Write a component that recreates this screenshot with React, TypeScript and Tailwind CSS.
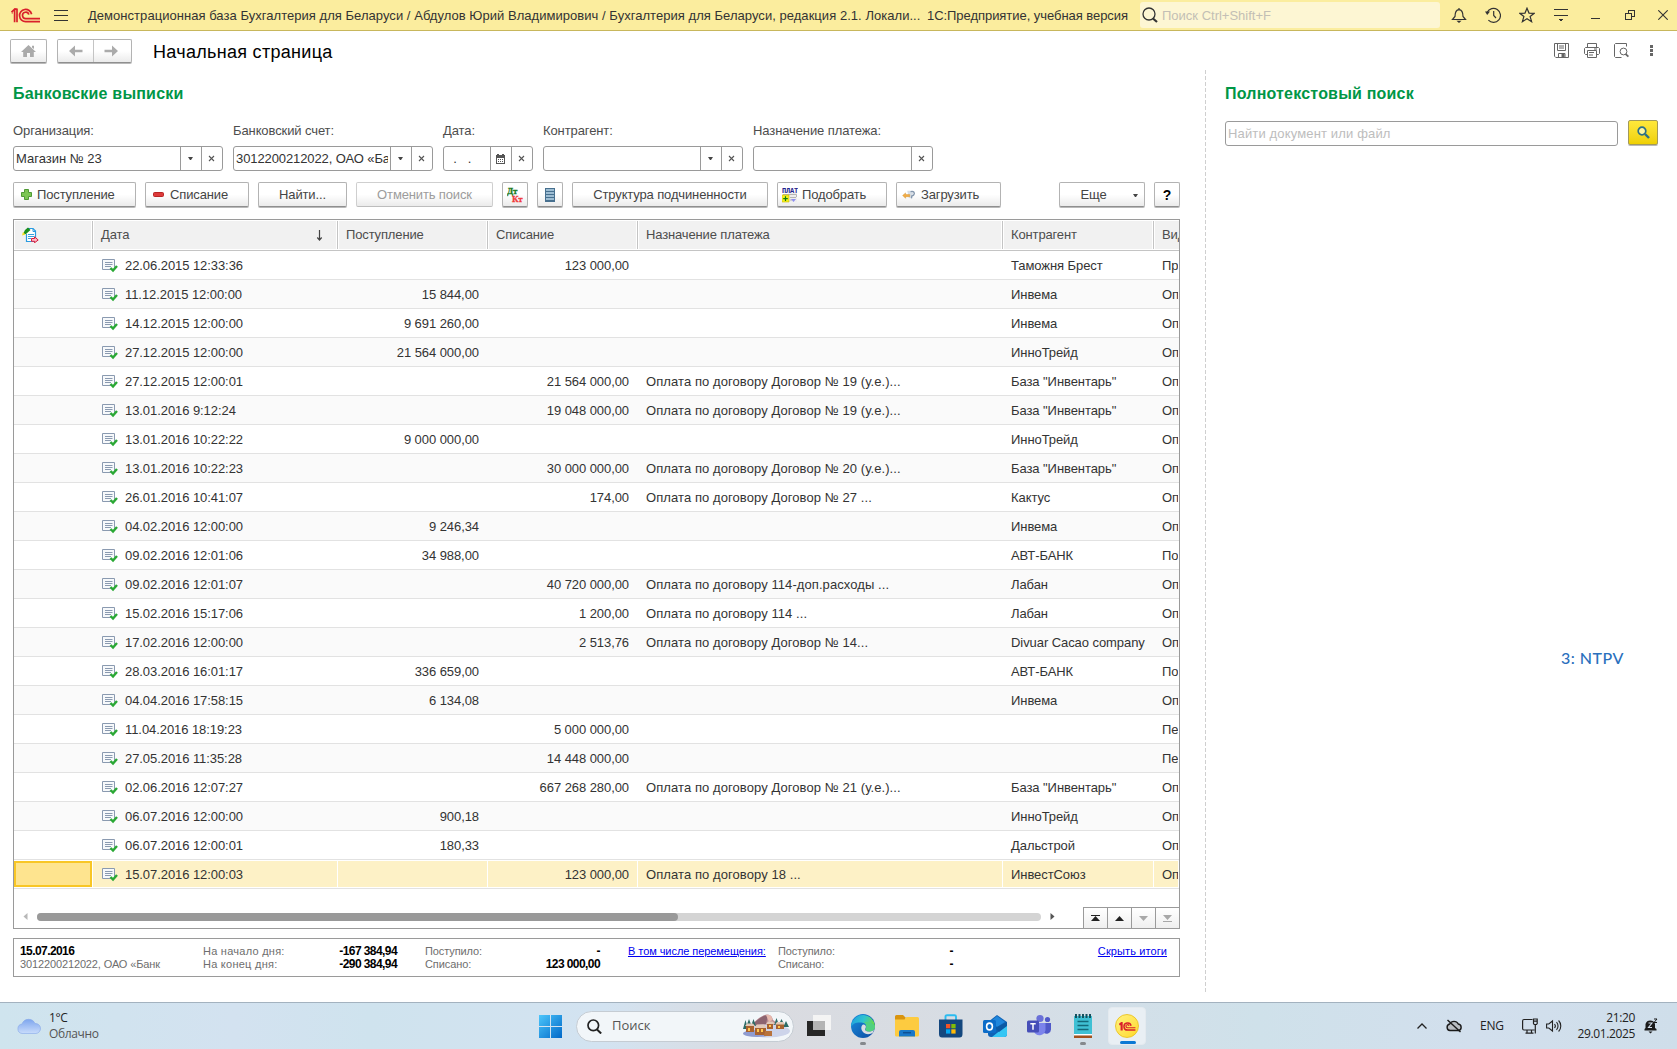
import React from "react";

type Row = [string, string, string, string, string, string];

const rows: Row[] = [
  ["22.06.2015 12:33:36", "", "123 000,00", "", "Таможня Брест", "Про"],
  ["11.12.2015 12:00:00", "15 844,00", "", "", "Инвема", "Опл"],
  ["14.12.2015 12:00:00", "9 691 260,00", "", "", "Инвема", "Опл"],
  ["27.12.2015 12:00:00", "21 564 000,00", "", "", "ИнноТрейд", "Опл"],
  ["27.12.2015 12:00:01", "", "21 564 000,00", "Оплата по договору Договор № 19 (у.е.)...", 'База "Инвентарь"', "Опл"],
  ["13.01.2016 9:12:24", "", "19 048 000,00", "Оплата по договору Договор № 19 (у.е.)...", 'База "Инвентарь"', "Опл"],
  ["13.01.2016 10:22:22", "9 000 000,00", "", "", "ИнноТрейд", "Опл"],
  ["13.01.2016 10:22:23", "", "30 000 000,00", "Оплата по договору Договор № 20 (у.е.)...", 'База "Инвентарь"', "Опл"],
  ["26.01.2016 10:41:07", "", "174,00", "Оплата по договору Договор № 27 ...", "Кактус", "Опл"],
  ["04.02.2016 12:00:00", "9 246,34", "", "", "Инвема", "Опл"],
  ["09.02.2016 12:01:06", "34 988,00", "", "", "АВТ-БАНК", "Пос"],
  ["09.02.2016 12:01:07", "", "40 720 000,00", "Оплата по договору 114-доп.расходы ...", "Лабан", "Опл"],
  ["15.02.2016 15:17:06", "", "1 200,00", "Оплата по договору 114 ...", "Лабан", "Опл"],
  ["17.02.2016 12:00:00", "", "2 513,76", "Оплата по договору Договор № 14...", "Divuar Cacao company", "Опл"],
  ["28.03.2016 16:01:17", "336 659,00", "", "", "АВТ-БАНК", "Пос"],
  ["04.04.2016 17:58:15", "6 134,08", "", "", "Инвема", "Опл"],
  ["11.04.2016 18:19:23", "", "5 000 000,00", "", "", "Пер"],
  ["27.05.2016 11:35:28", "", "14 448 000,00", "", "", "Пер"],
  ["02.06.2016 12:07:27", "", "667 268 280,00", "Оплата по договору Договор № 21 (у.е.)...", 'База "Инвентарь"', "Опл"],
  ["06.07.2016 12:00:00", "900,18", "", "", "ИнноТрейд", "Опл"],
  ["06.07.2016 12:00:01", "180,33", "", "", "Дальстрой", "Опл"],
  ["15.07.2016 12:00:03", "", "123 000,00", "Оплата по договору 18 ...", "ИнвестСоюз", "Опл"],
];

const GRID = "grid grid-cols-[79px_245px_150px_150px_365px_151px_25px]";

function Logo1C({ className }: { className?: string }) {
  return (
    <svg className={className} viewBox="0 0 29 15" fill="none" stroke="#d9202b" strokeWidth="1.7">
      <path d="M0.5 4.2 L3.6 1.2 V14.2 M0.8 4.9 H1.6 M6 0.6 V14.2 M3.2 1.2 H6" />
      <path d="M20.6 6.2 A6.1 6.1 0 1 0 14.8 13.6 H29" />
      <path d="M17.8 6.6 A3.2 3.2 0 1 0 14.8 10.6 H29" />
    </svg>
  );
}

function TitleBar() {
  return (
    <header className="flex h-[31px] shrink-0 items-center border-b border-[#c8b75c] bg-[#fbed9e] text-[13px] text-[#333]">
      <Logo1C className="ml-[11px] h-[15px] w-[29px]" />
      <svg className="ml-[14px] h-[13px] w-[14px]" viewBox="0 0 14 13" stroke="#333" shapeRendering="crispEdges">
        <path d="M0 1.5H14M0 6.5H14M0 11.5H14" />
      </svg>
      <span className="ml-5 w-[839px] pt-px tracking-[0.04px] whitespace-nowrap">
        Демонстрационная база Бухгалтерия для Беларуси / Абдулов Юрий Владимирович / Бухгалтерия для Беларуси, редакция 2.1. Локали...
      </span>
      <span className="w-[213px] pt-px tracking-[-0.05px] whitespace-nowrap">1С:Предприятие, учебная версия</span>
      <div className="flex h-[26px] w-[300px] items-center rounded-[3px] bg-[#fdf6d3] pl-[2px] text-[#c3bfb5]">
        <svg className="mr-[4px] h-4 w-4" viewBox="0 0 16 16" fill="none" stroke="#333">
          <circle cx="7" cy="7" r="6" strokeWidth="1.3" />
          <path d="M11 11.5L15 15" strokeWidth="2.2" />
        </svg>
        <span className="pt-px">Поиск Ctrl+Shift+F</span>
      </div>
      <svg className="ml-[11px] h-4 w-4" viewBox="0 0 16 16" fill="none" stroke="#333" strokeWidth="1.2">
        <path d="M1.500 12.500H14.500L12 9.500C12 5 10.800 2.800 8 2.600C5.200 2.800 4 5 4 9.500ZM8 1V2.600" />
        <path d="M5.500 13.800H10.500L8 16Z" fill="#333" stroke="none" />
      </svg>
      <svg className="ml-[18px] h-4 w-4" viewBox="0 0 16 16" fill="none" stroke="#333" strokeWidth="1.2">
        <path d="M2.200 5.200A7 7 0 1 1 3.400 13.200M8.700 4V8.500L11 11" />
        <path d="M0 4.500H5L2.200 8Z" fill="#333" stroke="none" />
      </svg>
      <svg className="ml-[18px] h-4 w-4" viewBox="0 0 16 16" fill="none" stroke="#333" strokeWidth="1.2">
        <path d="M8 1.200L10 6.100L15.200 6.300L11.100 9.500L12.600 14.700L8 11.700L3.400 14.700L4.900 9.500L0.800 6.300L6 6.100Z" />
      </svg>
      <svg className="ml-[19px] h-[13px] w-[14px]" viewBox="0 0 14 13" stroke="#333" shapeRendering="crispEdges">
        <path d="M0 0.500H14M0 6.500H14" />
        <path d="M4.500 10H9.500L7 13Z" fill="#333" stroke="none" />
      </svg>
      <span className="mt-[7px] ml-[23px] h-px w-[9px] bg-[#333]" />
      <svg className="ml-[25px] h-[10px] w-[10px]" viewBox="0 0 10 10" fill="none" stroke="#333" shapeRendering="crispEdges">
        <path d="M0.500 3.500H6.500V9.500H0.500ZM3.500 3V0.500H9.500V6.500H7" />
      </svg>
      <svg className="ml-[23px] h-[10px] w-[10px]" viewBox="0 0 10 10" stroke="#333" strokeWidth="1.1">
        <path d="M0.300 0.300L9.700 9.700M9.700 0.300L0.300 9.700" />
      </svg>
    </header>
  );
}

const btn =
  "flex items-center rounded-[2px] border border-[#b3b3b3] border-b-[#8f8f8f] bg-linear-to-b from-white from-50% to-[#ebebeb] shadow-[0_1px_0_#b9b9b9]";

function NavBar() {
  return (
    <div className="flex h-[39px] shrink-0 pt-2 pl-[10px]">
      <div className={`${btn} h-6 w-[37px] justify-center`}>
        <svg className="h-3 w-[15px]" viewBox="0 0 15 12" fill="#ababab">
          <path d="M7.500 0L15 7H12.800V12H9V8H6V12H2.200V7H0ZM11 0.800H13V4L11 2.400Z" />
        </svg>
      </div>
      <div className={`${btn} ml-[10px] h-6 w-[75px]`}>
        <div className="flex flex-1 justify-center pl-px">
          <svg className="h-3 w-[14px]" viewBox="0 0 14 12" fill="#ababab">
            <path d="M0 6L6 0.600V4.800H13.500V7.200H6V11.400Z" />
          </svg>
        </div>
        <span className="h-[22px] w-px bg-[#c4c4c4]" />
        <div className="flex flex-1 justify-center pr-[3px]">
          <svg className="h-3 w-[14px]" viewBox="0 0 14 12" fill="#ababab">
            <path d="M14 6L8 0.600V4.800H0.500V7.200H8V11.400Z" />
          </svg>
        </div>
      </div>
      <h1 className="ml-[21px] w-[1401px] text-[18px] leading-[26px] tracking-[0.3px] text-black">Начальная страница</h1>
      <div className="flex h-[15px] gap-[15px] pt-[4px]">
        <svg className="h-[15px] w-[15px]" viewBox="0 0 15 15" fill="none" stroke="#666">
          <path d="M1 0.500H14.500V14.500H1.800L0.500 13.200V0.500ZM3.500 0.500V7.500H11.500V0.500M5 3H10M5 5H10M4.500 14V10.500H11V14" />
          <path d="M7.500 11H10.500V14H7.500Z" fill="#666" stroke="none" />
        </svg>
        <svg className="h-[15px] w-4" viewBox="0 0 16 15" fill="none" stroke="#666">
          <path d="M3.500 4V0.500H12.500V4M3 11.500H1.500L0.500 10.500V5.500L1.500 4.500H14.500L15.500 5.500V10.500L14.500 11.500H13M3.500 7.500H12.500V14.500H3.500ZM5 9.500H10M5 12H9M10 6H13" />
        </svg>
        <svg className="-ml-px h-[15px] w-[15px]" viewBox="0 0 15 15" fill="none" stroke="#666">
          <path d="M7.500 14.500H1.500L0.500 13.500V1.500L1.500 0.500H12.500V3.500" />
          <circle cx="9.500" cy="8.500" r="3.400" />
          <path d="M11.500 10.800L14.400 13.600" strokeWidth="1.800" />
        </svg>
        <svg className="ml-[6px] h-[15px] w-[3px]" viewBox="0 0 3 15" fill="#666">
          <path d="M0 2H3V5H0ZM0 6H3V9H0ZM0 10H3V13H0Z" />
        </svg>
      </div>
    </div>
  );
}

function Field({ label, width, value, first, clip }: { label: string; width: string; value?: string; first?: "drop" | "cal"; clip?: boolean }) {
  return (
    <div className={width}>
      <div className="h-[18px] leading-[18px] tracking-[-0.1px] whitespace-nowrap text-[#4d4d4d]">{label}</div>
      <div className="mt-[6px] flex h-[25px] rounded-[3px] border border-[#9a9a9a] bg-white">
        <span className={`min-w-0 flex-1 overflow-hidden pl-[2px] leading-[24px] whitespace-pre text-[#333] ${clip ? "mr-[2px] tracking-[-0.1px]" : ""}`}>{value}</span>
        {first && (
          <span className="flex w-[21px] items-center justify-center border-l border-[#9a9a9a]">
            {first === "drop" ? (
              <svg className="mr-px h-[3px] w-[5px]" viewBox="0 0 5 3" fill="#444">
                <path d="M0 0H5L3 3H2Z" />
              </svg>
            ) : (
              <svg className="mr-[2px] h-[10px] w-[9px]" viewBox="0 0 9 10" fill="#555">
                <path d="M0 1H1V0H3V1H6V0H8V1H9V10H0ZM1 4V9H8V4Z" fillRule="evenodd" />
                <path d="M2 5H3V6H2ZM4 5H5V6H4ZM6 5H7V6H6ZM2 7H3V8H2ZM4 7H5V8H4ZM6 7H7V8H6Z" />
              </svg>
            )}
          </span>
        )}
        <span className="flex w-[21px] items-center justify-center border-l border-[#9a9a9a]">
          <svg className="mr-[2px] h-[7px] w-[7px]" viewBox="0 0 7 7" stroke="#555" strokeWidth="1.1">
            <path d="M1 1L6 6M6 1L1 6" />
          </svg>
        </span>
      </div>
    </div>
  );
}

function Filters() {
  return (
    <div className="mt-[18px] flex gap-[10px]">
      <Field label="Организация:" width="w-[210px]" value="Магазин № 23" first="drop" />
      <Field label="Банковский счет:" width="w-[200px]" value="3012200212022, ОАО «Банк" first="drop" clip />
      <Field label="Дата:" width="w-[90px]" value="  .   ." first="cal" />
      <Field label="Контрагент:" width="w-[200px]" first="drop" />
      <Field label="Назначение платежа:" width="w-[180px]" />
    </div>
  );
}

function Toolbar() {
  return (
    <div className="mt-[11px] flex h-[25px] tracking-[-0.14px] text-[#444]">
      <button className={`${btn} w-[123px] pl-[7px]`}>
        <svg className="mr-[5px] h-[11px] w-[11px]" viewBox="0 0 11 11">
          <path d="M3.500 0.500H7.500V3.500H10.500V7.500H7.500V10.500H3.500V7.500H0.500V3.500H3.500Z" fill="#7cc653" stroke="#4f9a35" />
        </svg>
        Поступление
      </button>
      <button className={`${btn} ml-[9px] w-[104px] pl-[7px]`}>
        <svg className="mr-[6px] h-[5px] w-[11px]" viewBox="0 0 11 5">
          <rect x="0.5" y="0.5" width="10" height="4" rx="1" fill="#dc3a3a" stroke="#b92424" />
        </svg>
        Списание
      </button>
      <button className={`${btn} ml-[9px] w-[89px] justify-center`}>Найти...</button>
      <button className={`${btn} ml-[9px] w-[137px] justify-center border-[#cfcfcf] border-b-[#bdbdbd] text-[#9c9c9c] shadow-none`}>Отменить поиск</button>
      <button className={`${btn} ml-[9px] w-[26px] justify-center`}>
        <svg className="h-4 w-4" viewBox="0 0 16 16" fontFamily="Liberation Serif, serif" fontWeight="bold" fontSize="9">
          <text x="0" y="6.5" fill="#1c7a1c" stroke="#1c7a1c" strokeWidth="0.3">Дт</text>
          <text x="5" y="15" fill="#f03a3a" stroke="#f03a3a" strokeWidth="0.3">Кт</text>
        </svg>
      </button>
      <button className={`${btn} ml-[9px] w-[26px] justify-center`}>
        <svg className="h-[14px] w-[10px]" viewBox="0 0 10 14">
          <path d="M0 0H10V14H0Z" fill="#47708f" />
          <path d="M1 1H9V3H1ZM1 4H9V6H1ZM1 7H9V9H1ZM1 10H9V12H1Z" fill="#9dbdd3" />
        </svg>
      </button>
      <button className={`${btn} ml-[9px] w-[196px] justify-center`}>Структура подчиненности</button>
      <button className={`${btn} ml-[9px] w-[110px] pl-[4px]`}>
        <svg className="mr-[4px] h-4 w-4" viewBox="0 0 16 16">
          <path d="M6 6H15V15H6Z" fill="#eee" />
          <path d="M1 7.500H14.500V10M8 10.500H14M8 13H10" stroke="#b5b5b5" fill="none" />
          <text x="0" y="5.5" fill="#22228c" fontSize="7" fontWeight="bold" fontFamily="Liberation Mono, monospace" letterSpacing="-0.2">ПЛАТ</text>
          <path d="M0 8H7V15H0Z" fill="#f5f020" stroke="#c9b800" strokeWidth="0.6" />
          <path d="M3.500 9.300V13.900M1.200 11.600H5.800" stroke="#0a7d0a" strokeWidth="1.2" />
          <path d="M9 12H14L11.500 15Z" fill="#8f8ff0" />
        </svg>
        Подобрать
      </button>
      <button className={`${btn} ml-[9px] w-[105px] pl-[4px]`}>
        <svg className="mr-[5px] h-[10px] w-[15px]" viewBox="0 0 15 12">
          <path d="M6 1H10L13 3L12 9L8 10Z" fill="#d5dde6" />
          <path d="M10 2Q14 1 14.500 4Q14 7 11.500 7L11 10" stroke="#8497ad" strokeWidth="1.600" fill="none" />
          <path d="M0.500 6.500L4 3.500V5.500H9V8H4V10Z" fill="#f3ad45" stroke="#cf8a28" strokeWidth="0.500" />
        </svg>
        Загрузить
      </button>
      <button className={`${btn} relative ml-[58px] w-[86px] justify-center pr-[17px]`}>
        Еще
        <svg className="absolute top-[11px] right-[6px] h-[3px] w-[5px]" viewBox="0 0 5 3" fill="#444">
          <path d="M0 0H5L3 3H2Z" />
        </svg>
      </button>
      <button className={`${btn} ml-[9px] w-[26px] justify-center pt-px text-[14px] font-bold text-black`}>?</button>
    </div>
  );
}

function DocIcon() {
  return (
    <svg className="mr-[7px] h-[14px] w-[16px] shrink-0" viewBox="0 0 16 14" fill="none">
      <path d="M0.500 0.500H12.500V10.500H0.500Z" fill="#f7f9fb" stroke="#8a9ab0" />
      <path d="M3 3.500H10.500M3 5.500H10.500M3 7.500H9" stroke="#8a9ab0" />
      <path d="M8.500 9L11 11.500L15 7" stroke="#2aa834" strokeWidth="2.400" />
    </svg>
  );
}

function HeaderCell({ children, last }: { children?: React.ReactNode; last?: boolean }) {
  return (
    <div className="border-t border-b border-l border-white bg-[#f1f1f1]">
      <div className={`flex h-full items-center overflow-hidden pl-[7px] whitespace-nowrap ${last ? "" : "border-r border-[#c4c4c4] shadow-[inset_-1px_0_0_#fff]"}`}>{children}</div>
    </div>
  );
}

function Table() {
  return (
    <div className="mt-3 flex h-[710px] w-[1167px] flex-col border border-[#9a9a9a]">
      <div className={`${GRID} h-[31px] shrink-0 border-b border-[#c4c4c4] tracking-[-0.14px] text-[#4d4d4d]`}>
        <HeaderCell>
          <svg className="h-4 w-[17px]" viewBox="0 0 17 16" fill="none">
            <path d="M5 1.500H11L13.500 4V14.500H4.500V7" fill="#fff" stroke="#2b9be0" strokeWidth="1.200" />
            <path d="M11 1.500V4.500H13.500" stroke="#2b9be0" />
            <path d="M6 7.500H12M6 9.500H12M6 11.500H9" stroke="#3aa0dc" />
            <path d="M1 7L3 3L6 0.500L8.500 3L4 7Z" fill="#1c8f1c" />
            <path d="M0 8.500L1 5L3.500 7.500Z" fill="#f0e020" />
            <path d="M9.500 11.500H12.500V9.800L16.200 13L12.500 15.800V14.300H9.500Z" fill="#ffb9c6" stroke="#d81e3c" />
          </svg>
        </HeaderCell>
        <HeaderCell>
          <span className="flex-1">Дата</span>
          <svg className="mr-[14px] h-[11px] w-[7px]" viewBox="0 0 7 11" fill="none" stroke="#444">
            <path d="M3.500 0V10M1.300 7.500L3.500 10L5.700 7.500" strokeWidth="1.200" />
          </svg>
        </HeaderCell>
        <HeaderCell>Поступление</HeaderCell>
        <HeaderCell>Списание</HeaderCell>
        <HeaderCell>Назначение платежа</HeaderCell>
        <HeaderCell>Контрагент</HeaderCell>
        <HeaderCell last>Вид</HeaderCell>
      </div>
      {rows.map((r, i) => {
        const sel = i === rows.length - 1;
        const cell = `flex items-center overflow-hidden whitespace-nowrap border-r ${sel ? "border-white" : "border-transparent"}`;
        return (
          <div
            key={i}
            className={`${GRID} h-[29px] shrink-0 border-b border-[#e2e2e2] tracking-[-0.07px] text-[#333] ${sel ? "bg-[#fdf1c6] shadow-[inset_0_1px_0_#fff,inset_0_-1px_0_#fff]" : i % 2 ? "bg-[#fafafa]" : "bg-white"}`}
          >
            <div className={cell}>{sel && <span className="h-[26px] w-full border-2 border-[#f8c626] bg-[#fee48f]" />}</div>
            <div className={`${cell} pt-[2px] pl-[9px]`}>
              <DocIcon />
              {r[0]}
            </div>
            <div className={`${cell} justify-end pt-[2px] pr-[8px]`}>{r[1]}</div>
            <div className={`${cell} justify-end pt-[2px] pr-[8px]`}>{r[2]}</div>
            <div className={`${cell} pt-[2px] pl-[8px] tracking-[0.08px]`}>{r[3]}</div>
            <div className={`${cell} pt-[2px] pl-[8px]`}>{r[4]}</div>
            <div className={`${cell} pt-[2px] pl-[8px]`}>{r[5]}</div>
          </div>
        );
      })}
      <div className="flex flex-1 items-end">
        <svg className="mb-[8px] ml-[9px] h-[7px] w-[5px]" viewBox="0 0 5 7" fill="#b8b8b8">
          <path d="M4.500 0V7L0.500 3.500Z" />
        </svg>
        <div className="mb-[7px] ml-[9px] h-2 w-[1004px] rounded-full bg-[#d4d4d4]">
          <div className="h-2 w-[641px] rounded-full bg-[#999]" />
        </div>
        <svg className="mb-[8px] ml-[9px] h-[7px] w-[5px]" viewBox="0 0 5 7" fill="#555">
          <path d="M0.500 0V7L4.500 3.500Z" />
        </svg>
        <div className="ml-auto flex h-[21px] border-t border-[#9a9a9a]">
          {["M0 0H9V1H0ZM4.500 1L9 6H0Z", "M4.500 1L9 6H0Z", "M0 1H9L4.500 6Z", "M0 0H9L4.500 5ZM0 6H9V7H0Z"].map((d, i) => (
            <span key={i} className="flex w-6 items-center justify-center border-l border-[#9a9a9a] bg-linear-to-b from-white to-[#efefef]">
              <svg className="h-[7px] w-[9px]" viewBox="0 0 9 7" fill={i < 2 ? "#222" : "#a8a8a8"}>
                <path d={d} />
              </svg>
            </span>
          ))}
        </div>
      </div>
    </div>
  );
}

function Bold({ children, className }: { children: React.ReactNode; className: string }) {
  return <b className={`text-[12px] leading-[13px] tracking-[-0.58px] text-black ${className}`}>{children}</b>;
}

function Totals() {
  return (
    <div className="mt-[9px] flex h-[39px] w-[1167px] border border-[#9a9a9a] pt-[6px] text-[11px] leading-[13px] whitespace-nowrap text-[#6e6e6e]">
      <div className="w-[182px] pl-[6px] tracking-[-0.13px]">
        <Bold className="block">15.07.2016</Bold>
        3012200212022, ОАО «Банк
      </div>
      <div className="ml-[7px] w-[94px] tracking-[0.25px]">
        На начало дня:
        <br />
        На конец дня:
      </div>
      <Bold className="w-[100px] text-right">
        -167 384,94
        <br />
        -290 384,94
      </Bold>
      <div className="ml-[28px] w-[90px] tracking-[-0.1px]">
        Поступило:
        <br />
        Списано:
      </div>
      <Bold className="w-[85px] text-right">
        -<br />
        123 000,00
      </Bold>
      <a className="ml-[28px] w-[150px] tracking-[-0.06px] text-[#0000f0] underline">В том числе перемещения:</a>
      <div className="w-[90px] tracking-[-0.1px]">
        Поступило:
        <br />
        Списано:
      </div>
      <Bold className="w-[85px] text-right">
        -<br />-
      </Bold>
      <a className="mr-3 ml-auto tracking-[0.1px] text-[#0000f0] underline">Скрыть итоги</a>
    </div>
  );
}

function SearchPanel() {
  return (
    <section className="flex-1 pt-[14px] pl-[19px]">
      <h2 className="h-5 text-[16px] leading-5 font-bold tracking-[0.2px] text-[#009646]">Полнотекстовый поиск</h2>
      <div className="mt-[16px] flex gap-[10px]">
        <div className="mt-px h-[25px] w-[393px] rounded-[3px] border border-[#9a9a9a] pl-[2px] leading-[24px] tracking-[0.15px] text-[#bdbdbd]">Найти документ или файл</div>
        <div className="flex h-[25px] w-[30px] items-center justify-center rounded-[2px] border border-[#a39a5a] bg-linear-to-b from-[#ffe83a] to-[#efd000] shadow-[0_1px_0_#b9b9b9]">
          <svg className="h-[13px] w-[13px]" viewBox="0 0 13 13" fill="none" stroke="#2d6f86">
            <circle cx="5" cy="5" r="3.800" strokeWidth="1.700" fill="#fff6a0" />
            <path d="M8 8L12 12" strokeWidth="2.400" />
          </svg>
        </div>
      </div>
      <div className="mt-[500px] ml-[336px] font-['Lato'] text-[16px] leading-6 font-medium tracking-[0.5px] text-[#2a70bd]">3: NTPV</div>
    </section>
  );
}

function Village() {
  return (
    <svg className="h-6 w-12" viewBox="0 0 48 24">
      <path d="M8 13Q18 1 25 0.500Q30 1 31 6L40 13Z" fill="#b98a91" />
      <path d="M10 11Q18 3 22 2L26 1L24 10Z" fill="#8c6470" />
      <path d="M24 1Q30 0 30.500 6L27 8Z" fill="#e7b9ad" />
      <ellipse cx="26" cy="17" rx="22" ry="6.500" fill="#cdd4ea" />
      <ellipse cx="15" cy="19.500" rx="14" ry="3.500" fill="#8f9bcf" />
      <path d="M1 15L3.500 6L6 15ZM4 13L7 5L10 13ZM9 12L11.500 5L14 12ZM32 11L34.500 4L37 11ZM36 12L39.500 5L43 12ZM41 13L44 7L47 13Z" fill="#2c6b66" />
      <path d="M4 12H12V18H4ZM13 13H24V21H13ZM25 9H31V15H25ZM34 10H42V15H34Z" fill="#a8622f" />
      <path d="M6 14H8V17H6ZM15 15H17V18H15ZM19 15H21V18H19ZM27 11H29V13H27ZM36 12H38V14H36Z" fill="#ffc84f" />
      <path d="M3 12L5 9.500H11L13 12ZM12 14L15 10.500H22L25 14ZM24 10L26 7.500H31L33 10ZM33 10.500L35 8H41L43 10.500Z" fill="#e2c9b8" />
      <path d="M23 17H30V22H22Z" fill="#b8733c" />
    </svg>
  );
}

function Taskbar() {
  return (
    <footer className="flex h-[47px] shrink-0 items-center border-t border-[#a3b2bf] bg-[linear-gradient(90deg,#cfe4ee_0%,#d3e2f0_14%,#cfe3ee_22%,#d3e3f1_36%,#dadbe0_45%,#d7dde4_58%,#d3dfe8_66%,#cfe1ea_75%,#d2dfed_88%,#cfdeea_100%)] font-['Open_Sans'] text-[12px] text-[#222]">
      <svg className="ml-[17px] h-4 w-6" viewBox="0 0 24 16">
        <defs>
          <linearGradient id="cl" x1="0" y1="0" x2="0" y2="1">
            <stop offset="0" stopColor="#7ea6ee" />
            <stop offset="1" stopColor="#c9dcfb" />
          </linearGradient>
        </defs>
        <path d="M5 15.500A4.800 4.800 0 0 1 5 6A7 7 0 0 1 18 5.500A5 5 0 0 1 19 15.500Z" fill="url(#cl)" stroke="#86a8ea" strokeWidth="0.600" />
      </svg>
      <div className="ml-2 w-[490px] leading-4 tracking-[-0.35px]">
        1°C
        <div className="text-[#555]">Облачно</div>
      </div>
      <svg className="h-[23px] w-[23px]" viewBox="0 0 23 23">
        <defs>
          <linearGradient id="win" x1="0" y1="0" x2="1" y2="1">
            <stop offset="0" stopColor="#4cc6fb" />
            <stop offset="1" stopColor="#0068c8" />
          </linearGradient>
        </defs>
        <path d="M0 0H11V11H0ZM12 0H23V11H12ZM0 12H11V23H0ZM12 12H23V23H12Z" fill="url(#win)" />
      </svg>
      <div className="ml-[14px] flex h-[31px] w-[218px] items-center rounded-full border border-[#c5ccd3] bg-[#f2f6f9] pl-[10px] text-[13px] text-[#555]">
        <svg className="mr-[10px] h-[15px] w-[15px]" viewBox="0 0 15 15" fill="none" stroke="#222" strokeWidth="1.700">
          <circle cx="6.300" cy="6.300" r="5.300" />
          <path d="M10 10.500L14.200 14.500" strokeWidth="2" />
        </svg>
        <span className="w-[130px]">Поиск</span>
        <Village />
      </div>
      <svg className="ml-[13px] h-6 w-6" viewBox="0 0 24 24">
        <path d="M0 7H18V22H0Z" fill="#262626" />
        <path d="M6 1H24V16H6Z" fill="#f4f4f4" />
        <path d="M6 7H18V16H6Z" fill="#b4b4b4" />
      </svg>
      <div className="relative ml-5">
        <svg className="h-6 w-6" viewBox="0 0 24 24">
          <defs>
            <linearGradient id="eg" x1="0" y1="0" x2="1" y2="0.300">
              <stop offset="0" stopColor="#1f9de0" />
              <stop offset="0.550" stopColor="#2fc3d0" />
              <stop offset="1" stopColor="#66d94a" />
            </linearGradient>
            <linearGradient id="eb" x1="0" y1="0" x2="1" y2="1">
              <stop offset="0" stopColor="#1b8fdf" />
              <stop offset="1" stopColor="#0b4aa0" />
            </linearGradient>
          </defs>
          <circle cx="12" cy="12" r="12" fill="url(#eb)" />
          <path d="M0.300 10.500A12 12 0 0 1 24 12C24 16 20.500 18 17 17.500C14 17 14 15.500 15 14C16 12 14.500 8.500 10.500 8.500C6 8 1.500 9 0.300 13Z" fill="url(#eg)" />
          <path d="M24 12.500C24 16 20.500 18 17 17.500C14 17 13.500 15.500 14.700 14C15.500 11.800 14 10.300 12 10.500C9.500 12 9.500 17 14 19.500C17 21 20 20 22 18.500Z" fill="#dadde2" />
          <path d="M24 12C24 16 20.500 18 17 17.300C14.500 16.700 14.500 15 15.300 13.800C16 11 15 9.300 13 8.500C18 7 22 9 24 12Z" fill="#4fd080" />
        </svg>
        <span className="absolute -bottom-[7px] left-[9px] h-[3px] w-[6px] rounded-full bg-[#85898d]" />
      </div>
      <svg className="ml-5 h-6 w-6" viewBox="0 0 24 24">
        <path d="M0 2.500Q0 1 1.500 1H8L10.500 3.500V6H0Z" fill="#d9940e" />
        <path d="M0 5.500H9.500L11.500 3H22.500Q24 3 24 4.500V21Q24 22.500 22.500 22.500H1.500Q0 22.500 0 21Z" fill="#fdcb40" />
        <path d="M4 22.500V18Q4 16 6 16H18Q20 16 20 18V22.500Z" fill="#1878c9" />
        <path d="M8 18.700H16" stroke="#0d4f93" strokeWidth="1.500" />
      </svg>
      <svg className="ml-5 h-6 w-6" viewBox="0 0 24 24">
        <path d="M6.500 6V2.500Q6.500 1.300 8 1.300H15.500Q17 1.300 17 2.500V6" fill="none" stroke="#2cbcf0" strokeWidth="1.900" />
        <path d="M0 5.500H23.500V20Q23.500 23.500 20.500 23.500H3Q0 23.500 0 20Z" fill="#14477e" />
        <path d="M7 10H11.300V14.300H7Z" fill="#f35325" />
        <path d="M12.300 10H16.600V14.300H12.300Z" fill="#81bc06" />
        <path d="M7 15.300H11.300V19.600H7Z" fill="#05a6f0" />
        <path d="M12.300 15.300H16.600V19.600H12.300Z" fill="#ffba08" />
      </svg>
      <svg className="ml-5 h-6 w-6" viewBox="0 0 24 24">
        <path d="M5 8L14 1L24 8V20Q24 23 21 23H8Q5 23 5 20Z" fill="#0f62b5" />
        <path d="M8 7L14 2L22 8L14 13Z" fill="#1f86dc" />
        <path d="M24 9V20Q24 23 21 23H9L24 11Z" fill="#35c6f4" />
        <path d="M12 14L24 8V12L16 18Z" fill="#0c59a4" />
        <rect x="0" y="6" width="13" height="13" rx="1.500" fill="#0c6cc8" />
        <ellipse cx="6.500" cy="12.500" rx="2.900" ry="3.400" fill="none" stroke="#fff" strokeWidth="1.600" />
      </svg>
      <svg className="ml-5 h-6 w-6" viewBox="0 0 24 24">
        <circle cx="13" cy="4.500" r="3.600" fill="#6a70d8" />
        <circle cx="20.500" cy="5.500" r="2.600" fill="#5059c9" />
        <path d="M17 9H24V15.500A4.500 4.500 0 0 1 17 19Z" fill="#5059c9" />
        <path d="M7 9H18.500V16A6 6 0 0 1 7 17.500Z" fill="#7b83eb" />
        <rect x="0" y="6.500" width="12" height="12" rx="1.500" fill="#464eb8" />
        <path d="M3.300 9.700H8.700M6 9.700V15.700" stroke="#fff" strokeWidth="1.500" />
      </svg>
      <div className="relative ml-[23px]">
        <svg className="h-6 w-[18px]" viewBox="0 0 18 24">
          <path d="M0 2H18V20H0Z" fill="#3fc0d4" />
          <path d="M1 0H3V4H1ZM4.500 0H6.500V4H4.500ZM8 0H10V4H8ZM11.500 0H13.500V4H11.500ZM15 0H17V4H15Z" fill="#14515e" />
          <path d="M3.500 7.500H14.500M3.500 11.500H14.500M3.500 15.500H14.500" stroke="#13697a" strokeWidth="1.600" />
          <path d="M0 20H18V21.500H0Z" fill="#fff" />
          <path d="M0 21.500H18V24H0Z" fill="#a4511c" />
        </svg>
        <span className="absolute -bottom-[7px] left-[6px] h-[3px] w-[6px] rounded-full bg-[#85898d]" />
      </div>
      <div className="relative ml-4 flex h-[38px] w-[38px] items-center justify-center rounded-[4px] border border-[#e4eaef] bg-[#e9eff4]">
        <span className="flex h-6 w-6 items-center justify-center rounded-full border border-[#ecc72c] bg-linear-to-br from-[#fff27c] to-[#ffd91c]">
          <svg className="h-[9px] w-[17px]" viewBox="0 0 29 15" fill="none" stroke="#d9202b" strokeWidth="2.600">
            <path d="M0.500 4.500L4.500 1.500V14.500" strokeWidth="3.600" />
            <path d="M20.600 6.200A6.100 6.100 0 1 0 14.800 13.600H28" />
            <path d="M17 6.600A2.600 2.600 0 1 0 14.800 9.600H28" strokeWidth="2" />
          </svg>
        </span>
        <span className="absolute bottom-0 left-[11px] h-[3px] w-4 rounded-full bg-[#0a78d4]" />
      </div>
      <svg className="ml-[271px] h-[6px] w-[10px]" viewBox="0 0 10 6" fill="none" stroke="#222" strokeWidth="1.300">
        <path d="M0.500 5.500L5 1L9.500 5.500" />
      </svg>
      <svg className="ml-[19px] h-[14px] w-4" viewBox="0 0 16 14" fill="none" stroke="#1a1a1a" strokeWidth="1.400">
        <path d="M4 11.500A3.300 3.300 0 0 1 3.700 5A4.800 4.800 0 0 1 12.300 5A3.300 3.300 0 0 1 12.500 11.500Z" fill="#b9bdc2" />
        <path d="M1.500 1L14.500 13" />
      </svg>
      <span className="ml-[18px] w-[42px] tracking-[-0.2px]">ENG</span>
      <svg className="h-4 w-4" viewBox="0 0 16 16" fill="none" stroke="#222" strokeWidth="1.200">
        <path d="M10.500 1.500H2Q0.600 1.500 0.600 3V10.500Q0.600 12 2 12H12.500M5 12V15.200M9.500 12V15.200M3.500 15.200H11.500M11.500 1H15.200V5.500L14.500 6.500H12.200L11.500 5.500ZM11.500 3.200H15M13.300 6.500V15.500" />
      </svg>
      <svg className="ml-2 h-[14px] w-4" viewBox="0 0 16 14" fill="none" stroke="#222" strokeWidth="1.100">
        <path d="M0.600 5V9H2.800L6.500 12V2L2.800 5ZM8.500 5A3 3 0 0 1 8.500 9M10.500 3.200A5.500 5.500 0 0 1 10.500 10.800M12.600 1.500A8 8 0 0 1 12.600 12.500" />
      </svg>
      <div className="w-[73px] text-right leading-4 tracking-[-0.37px]">
        21:20
        <br />
        29.01.2025
      </div>
      <svg className="ml-[9px] h-4 w-[14px]" viewBox="0 0 14 16">
        <path d="M0.500 12.500V11L1.500 10V6A5 5 0 0 1 11 6V10L12.500 11V12.500ZM4.500 13.500H8.500L6.500 15.500Z" fill="#1a1a1a" />
        <path d="M4.500 5H8L4.500 9.500H8" stroke="#d3dfec" fill="none" strokeWidth="1.100" />
        <path d="M10 1H13L10 4.500H13" stroke="#1a1a1a" fill="none" />
      </svg>
    </footer>
  );
}

export default function App() {
  return (
    <div className="flex h-[1049px] w-[1677px] flex-col overflow-hidden bg-white font-['Liberation_Sans',Arial,sans-serif] text-[13px]">
      <TitleBar />
      <NavBar />
      <div className="flex h-[932px] shrink-0">
        <main className="w-[1205px] pt-[14px] pl-[13px]">
          <h2 className="h-5 text-[16px] leading-5 font-bold tracking-[0.2px] text-[#009646]">Банковские выписки</h2>
          <Filters />
          <Toolbar />
          <Table />
          <Totals />
        </main>
        <div className="h-[922px] w-px bg-[repeating-linear-gradient(180deg,#cfcfcf_0_4px,#ffffff_4px_6px)]" />
        <SearchPanel />
      </div>
      <Taskbar />
    </div>
  );
}
